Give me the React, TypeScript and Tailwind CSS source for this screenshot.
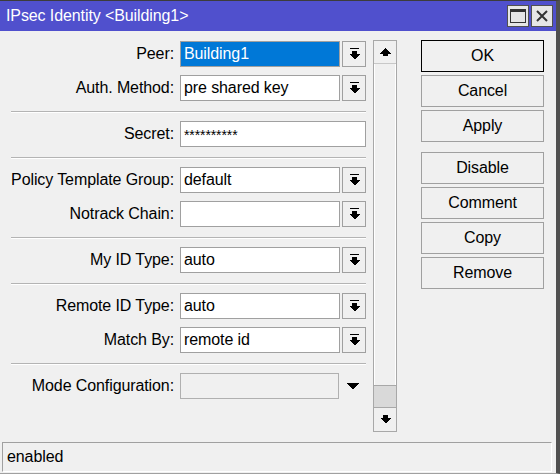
import React from "react";

const FONT = "font-['Liberation_Sans',Arial,sans-serif]";

function DropIcon() {
  return (
    <svg width="11" height="12" viewBox="0 0 11 12" shapeRendering="crispEdges">
      <rect x="1" y="0" width="9" height="1" fill="#000" />
      <rect x="3" y="3" width="5" height="3" fill="#000" />
      <polygon points="0,6 11,6 5.5,11.5" fill="#000" />
    </svg>
  );
}

function UpArrow() {
  return (
    <svg width="11" height="9" viewBox="0 0 11 9" shapeRendering="crispEdges">
      <polygon points="5.5,0 11,5.5 0,5.5" fill="#000" />
      <rect x="3" y="5" width="5" height="3" fill="#000" />
    </svg>
  );
}

function DownArrow() {
  return (
    <svg width="11" height="9" viewBox="0 0 11 9" shapeRendering="crispEdges">
      <rect x="3" y="0" width="5" height="3" fill="#000" />
      <polygon points="0,3 11,3 5.5,8.5" fill="#000" />
    </svg>
  );
}

function Row({
  label,
  value,
  selected,
}: {
  label: string;
  value: string;
  selected?: boolean;
}) {
  return (
    <div className="flex items-center h-[26px]">
      <div className="w-[174px] text-right whitespace-nowrap">{label}</div>
      <div
        className={
          selected
            ? "ml-[6px] w-[160px] h-[26px] border border-[#a0a0a0] bg-[#0078d7] text-white flex items-center pl-[3px]"
            : "ml-[6px] w-[160px] h-[26px] border border-[#a0a0a0] bg-white flex items-center pl-[3px]"
        }
      >
        {value}
      </div>
      <div className="ml-[2px] w-[24px] h-[26px] border border-[#a0a0a0] bg-[#f0f0f0] flex items-center justify-center">
        <DropIcon />
      </div>
    </div>
  );
}

function PlainRow({ label, value }: { label: string; value: string }) {
  return (
    <div className="flex items-center h-[26px]">
      <div className="w-[174px] text-right whitespace-nowrap">{label}</div>
      <div className="ml-[6px] w-[186px] h-[26px] border border-[#a0a0a0] bg-white flex items-center pl-[3px] text-[14px] leading-none">
        <span className="pt-[1px]">{value}</span>
      </div>
    </div>
  );
}

function Sep() {
  return (
    <div className="ml-[11px] w-[355px] mt-[10px] mb-[8px] h-[2px] border-t border-[#b4b4b4] border-b-white border-b" />
  );
}

function Btn({ label, primary }: { label: string; primary?: boolean }) {
  return (
    <div
      className={
        primary
          ? "h-[32px] border border-black bg-[#f0f0f0] flex items-center justify-center"
          : "h-[32px] border border-[#a0a0a0] bg-[#f0f0f0] flex items-center justify-center"
      }
    >
      {label}
    </div>
  );
}

export default function App() {
  return (
    <div
      className={`${FONT} w-[560px] h-[474px] bg-[#f0f0f0] text-black text-[16px] tracking-[-0.1px] flex flex-col border-t border-t-[#3c3c3c] border-r-[4px] border-r-[#505050] border-b border-b-[#a0a0a0] overflow-hidden`}
    >
      {/* Title bar */}
      <div className="h-[30px] bg-[#5050cd] flex items-center justify-between pl-[6px] pr-[3px]">
        <div className="text-white whitespace-nowrap">IPsec Identity &lt;Building1&gt;</div>
        <div className="flex gap-[2px]">
          <div className="w-[22px] h-[22px] border border-[#505050] bg-[#e6e6e6] flex items-center justify-center">
            <div className="w-[16px] h-[14px] border border-[#333] border-t-[3px]" />
          </div>
          <div className="w-[22px] h-[22px] border border-[#505050] bg-[#e6e6e6] flex items-center justify-center">
            <svg width="12" height="12" viewBox="0 0 12 12">
              <path d="M1 1 L11 11 M11 1 L1 11" stroke="#333" strokeWidth="2" />
            </svg>
          </div>
        </div>
      </div>

      {/* Body */}
      <div className="flex-1 flex pt-[9px]">
        <div className="w-[366px] pt-[1px] flex flex-col">
          <div className="flex flex-col gap-[8px]">
            <Row label="Peer:" value="Building1" selected />
            <Row label="Auth. Method:" value="pre shared key" />
          </div>
          <Sep />
          <PlainRow label="Secret:" value="**********" />
          <Sep />
          <div className="flex flex-col gap-[8px]">
            <Row label="Policy Template Group:" value="default" />
            <Row label="Notrack Chain:" value="" />
          </div>
          <Sep />
          <Row label="My ID Type:" value="auto" />
          <Sep />
          <div className="flex flex-col gap-[8px]">
            <Row label="Remote ID Type:" value="auto" />
            <Row label="Match By:" value="remote id" />
          </div>
          <Sep />
          <div className="flex items-center h-[26px]">
            <div className="w-[174px] text-right whitespace-nowrap">Mode Configuration:</div>
            <div className="ml-[6px] w-[159px] h-[26px] border border-[#b0b0b0] bg-[#f0f0f0]" />
            <div className="ml-[7px] flex items-center">
              <svg width="13" height="7" viewBox="0 0 13 7" shapeRendering="crispEdges">
                <polygon points="0,0 13,0 6.5,6.5" fill="#000" />
              </svg>
            </div>
          </div>
        </div>

        {/* Scrollbar */}
        <div className="ml-[7px] w-[24px] h-[392px] border border-[#a8a8a8] bg-[#f0f0f0] flex flex-col">
          <div className="h-[23px] border-b border-[#c8c8c8] flex items-center justify-center">
            <UpArrow />
          </div>
          <div className="flex-1 border-l border-r border-white" />
          <div className="h-[23px] bg-[#d9d9d9] border-t border-b border-[#a8a8a8]" />
          <div className="h-[23px] flex items-center justify-center">
            <DownArrow />
          </div>
        </div>

        {/* Buttons */}
        <div className="ml-[24px] w-[123px] flex flex-col gap-[3px]">
          <Btn label="OK" primary />
          <Btn label="Cancel" />
          <Btn label="Apply" />
          <div className="mt-[7px] flex flex-col gap-[3px]">
            <Btn label="Disable" />
            <Btn label="Comment" />
            <Btn label="Copy" />
            <Btn label="Remove" />
          </div>
        </div>
      </div>

      {/* Status bar */}
      <div className="ml-[2px] w-[550px] h-[30px] mb-[1px] border-t border-l border-[#a0a0a0] border-r-white border-b-white border-r border-b flex items-center pl-[4px]">
        enabled
      </div>
    </div>
  );
}
